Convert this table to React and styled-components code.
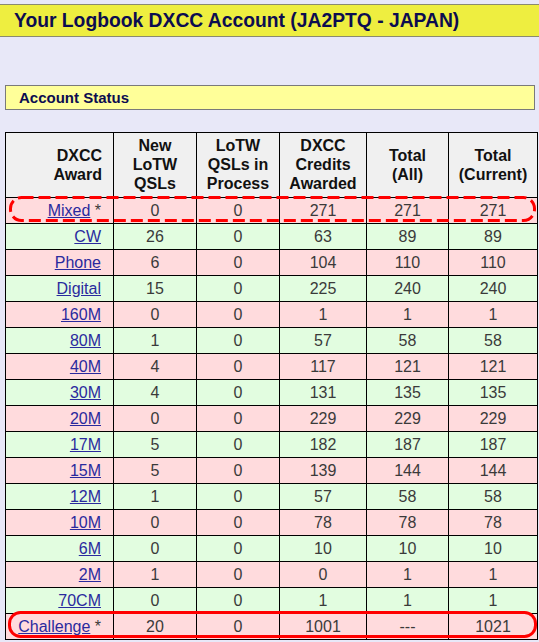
import styled, { createGlobalStyle } from 'styled-components';

const GlobalStyle = createGlobalStyle`
  html, body {
    margin: 0;
    padding: 0;
    background: #e8e8f8;
    font-family: "Liberation Sans", Arial, sans-serif;
  }
`;

const Page = styled.div`
  width: 539px;
  height: 642px;
  padding-top: 4px;
  box-sizing: border-box;
  overflow: hidden;
`;

const TitleBar = styled.div`
  height: 31px;
  background: #eeee40;
  border-top: 1px solid #8a8a70;
  border-bottom: 1px solid #8a8a70;
  display: flex;
  align-items: center;
  padding-left: 14px;
  font-size: 19.3px;
  font-weight: bold;
  color: #0c0c50;
`;

const SectionBar = styled.div`
  margin: 48px 4px 0 5px;
  height: 23px;
  background: #ffff99;
  border: 1px solid #7a7a7a;
  display: flex;
  align-items: center;
  padding-left: 13px;
  font-size: 15px;
  font-weight: bold;
  color: #0c0c50;
`;

const TableWrap = styled.div`
  position: relative;
  margin: 22px 2px 0 5px;
`;

const Table = styled.table`
  border-collapse: collapse;
  width: 532px;
  table-layout: fixed;
  border: 1px solid #000;
  font-size: 16px;
  color: #3a3a3a;
`;

const Th = styled.th`
  background: #f0f0f0;
  border: 1px solid #000;
  height: 63px;
  padding: 1px ${p => (p.$right ? 11 : 4)}px 0 4px;
  font-size: 16px;
  line-height: 18.7px;
  color: #111;
  text-align: ${p => (p.$right ? 'right' : 'center')};
`;

const Row = styled.tr`
  background: ${p => (p.$green ? '#e2fde0' : '#ffdbdd')};
`;

const Td = styled.td`
  border: 1px solid #000;
  height: 25px;
  padding: 0 ${p => (p.$right ? 12 : 4)}px 0 4px;
  text-align: ${p => (p.$right ? 'right' : 'center')};
`;

const AwardLink = styled.a`
  color: #2a2a9e;
  text-decoration: underline;
`;

const Mark = styled.svg`
  position: absolute;
  left: ${p => p.$left}px;
  top: ${p => p.$top}px;
  overflow: visible;
  pointer-events: none;
`;

function Highlight({ left, top, width, height, dashed }) {
  return (
    <Mark $left={left} $top={top} width={width} height={height}>
      <rect
        x="1.5"
        y="1.5"
        width={width - 3}
        height={height - 3}
        rx="11"
        fill="none"
        stroke="#f00"
        strokeWidth="3"
        strokeDasharray={dashed ? '12 5' : undefined}
      />
    </Mark>
  );
}

const rows = [
  ['Mixed', true, '0', '0', '271', '271', '271'],
  ['CW', false, '26', '0', '63', '89', '89'],
  ['Phone', false, '6', '0', '104', '110', '110'],
  ['Digital', false, '15', '0', '225', '240', '240'],
  ['160M', false, '0', '0', '1', '1', '1'],
  ['80M', false, '1', '0', '57', '58', '58'],
  ['40M', false, '4', '0', '117', '121', '121'],
  ['30M', false, '4', '0', '131', '135', '135'],
  ['20M', false, '0', '0', '229', '229', '229'],
  ['17M', false, '5', '0', '182', '187', '187'],
  ['15M', false, '5', '0', '139', '144', '144'],
  ['12M', false, '1', '0', '57', '58', '58'],
  ['10M', false, '0', '0', '78', '78', '78'],
  ['6M', false, '0', '0', '10', '10', '10'],
  ['2M', false, '1', '0', '0', '1', '1'],
  ['70CM', false, '0', '0', '1', '1', '1'],
  ['Challenge', true, '20', '0', '1001', '---', '1021'],
];

export default function App() {
  return (
    <Page>
      <GlobalStyle />
      <TitleBar>Your Logbook DXCC Account (JA2PTQ - JAPAN)</TitleBar>
      <SectionBar>Account Status</SectionBar>
      <TableWrap>
        <Table>
          <colgroup>
            <col style={{ width: 108 }} />
            <col style={{ width: 83 }} />
            <col style={{ width: 83 }} />
            <col style={{ width: 87 }} />
            <col style={{ width: 82 }} />
            <col style={{ width: 89 }} />
          </colgroup>
          <thead>
            <tr>
              <Th $right>DXCC<br />Award</Th>
              <Th>New<br />LoTW<br />QSLs</Th>
              <Th>LoTW<br />QSLs in<br />Process</Th>
              <Th>DXCC<br />Credits<br />Awarded</Th>
              <Th>Total<br />(All)</Th>
              <Th>Total<br />(Current)</Th>
            </tr>
          </thead>
          <tbody>
            {rows.map(([name, star, ...vals], i) => (
              <Row key={name} $green={i % 2 === 1}>
                <Td $right>
                  <AwardLink href="#">{name}</AwardLink>
                  {star && ' *'}
                </Td>
                {vals.map((v, j) => (
                  <Td key={j}>{v}</Td>
                ))}
              </Row>
            ))}
          </tbody>
        </Table>
        <Highlight dashed left={4} top={64} width={527} height={26} />
        <Highlight left={3} top={479} width={529} height={27} />
      </TableWrap>
    </Page>
  );
}
